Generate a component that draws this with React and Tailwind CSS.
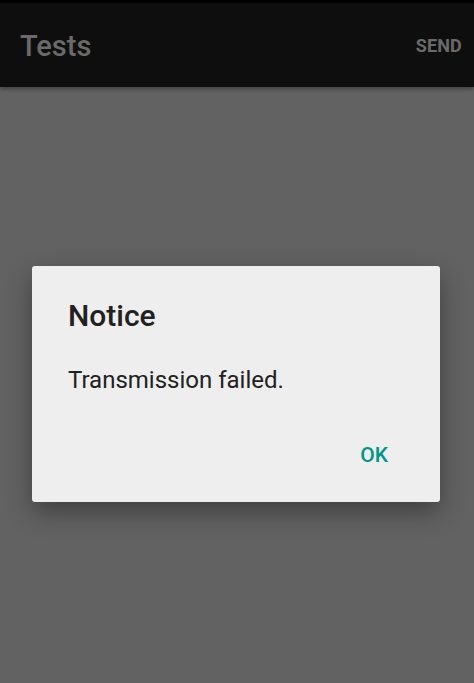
export default function App() {
  return (
    <div
      className="relative w-[474px] h-[683px] overflow-hidden bg-[#626262] flex flex-col"
      style={{ fontFamily: "Roboto, 'Noto Sans', sans-serif" }}
    >
      <div className="h-[3px] bg-black" />
      <header className="h-[84px] bg-[#0e0e0e] flex items-center justify-between pl-5 pr-3 pt-[2px] shadow-[0_2px_4px_rgba(0,0,0,0.35)] z-10">
        <h1 className="text-[29px] font-medium text-[#6a6a6a] leading-none">Tests</h1>
        <button className="text-[18px] font-bold text-[#6a6a6a] tracking-[0.01em] leading-none">SEND</button>
      </header>

      <div className="flex-1 flex items-start pl-8 pt-[179px]">
        <div className="w-[408px] h-[236px] bg-[#eeeeee] rounded-[3px] shadow-[0_10px_24px_rgba(0,0,0,0.35)] flex flex-col pl-9 pr-[52px]">
          <h2 className="text-[30px] font-medium text-[#212121] leading-none mt-[35px]">Notice</h2>
          <p className="text-[24px] text-[#212121] leading-none mt-[37px]">Transmission failed.</p>
          <div className="flex justify-end mt-[53px]">
            <button className="text-[21px] font-medium text-[#009688] leading-none">OK</button>
          </div>
        </div>
      </div>
    </div>
  );
}
